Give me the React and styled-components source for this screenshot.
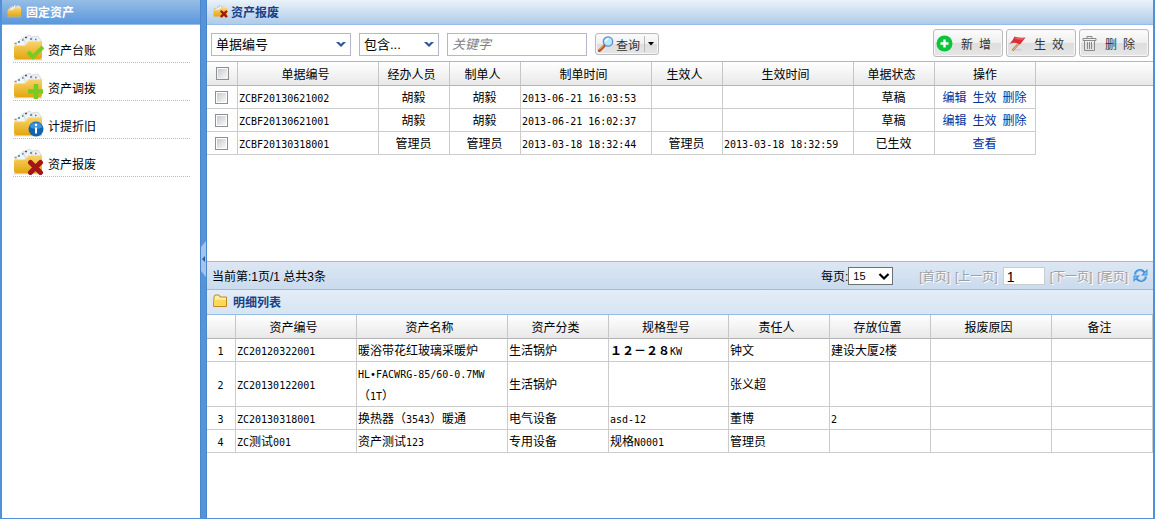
import React, { useState } from 'react';
import styled, { createGlobalStyle } from 'styled-components';

const GlobalStyle = createGlobalStyle`
  * {
    box-sizing: border-box;
  }

  body {
    margin: 0;
    color: #000;
    font-family: "Liberation Sans", "Noto Sans CJK SC", sans-serif;
    font-size: 12px;
  }

  button, input, select {
    font-family: inherit;
    font-size: inherit;
    margin: 0;
  }
`;

const Frame = styled.div`
  display: flex;
  min-height: 100vh;
  border: solid #5090d8;
  border-width: 0 2px 1px;
  background: #fff;
`;

const Sidebar = styled.aside`
  width: 198px;
  flex: none;
`;

const SidebarHeader = styled.h2`
  display: flex;
  align-items: center;
  gap: 4px;
  height: 25px;
  margin: 0;
  padding: 0 0 2px 5px;
  border-bottom: 1px solid #99bbe8;
  background: linear-gradient(#97bde6, #5a97dc);
  color: #fff;
  font-size: 12px;
`;

const Menu = styled.nav`
  padding: 0 10px 0 11px;
`;

const MenuItem = styled.a`
  display: flex;
  align-items: center;
  gap: 4px;
  height: 38px;
  padding-top: 7px;
  border-bottom: 1px dotted #bbb;
  color: #000;
  text-decoration: none;
`;

const MenuLabel = styled.span`
  padding-top: 4px;
`;

const Splitter = styled.div`
  display: flex;
  align-items: center;
  justify-content: flex-end;
  width: 7px;
  flex: none;
  border: solid #4a86d0;
  border-width: 0 1px;
  background: #5793d7;
`;

const SplitterHandle = styled.button`
  display: flex;
  padding: 0;
  border: 0;
  background: none;
`;

const Main = styled.main`
  flex: 1;
  min-width: 0;
`;

const PanelHeader = styled.h1`
  display: flex;
  align-items: center;
  gap: 3px;
  height: 25px;
  margin: 0;
  padding: 0 0 2px 6px;
  border-bottom: 1px solid #99bbe8;
  background: linear-gradient(#ebf2fa, #afcbe8);
  color: #15428b;
  font-size: 12px;
`;

const SectionHeader = styled(PanelHeader).attrs({ as: 'h2' })`
  gap: 5px;
  background: linear-gradient(#e4edf7, #d8e4f2);
`;

const Toolbar = styled.div`
  display: flex;
  align-items: center;
  justify-content: space-between;
  height: 37px;
  padding: 0 4px;
  border-bottom: 1px solid #99bbe8;
`;

const Filters = styled.form`
  display: flex;
  align-items: center;
  gap: 8px;
  padding-top: 2px;
`;

const Actions = styled.div`
  display: flex;
  gap: 3px;
`;

const SelectBox = styled.div`
  position: relative;
  width: ${({ $width }) => $width}px;

  svg {
    position: absolute;
    top: 8px;
    right: 5px;
    pointer-events: none;
  }
`;

const Select = styled.select`
  appearance: none;
  width: 100%;
  height: 23px;
  padding: 0 4px;
  border: 1px solid #b5b8c8;
  border-radius: 0;
  background: #fff;
  color: #000;
  font-size: 13px;
`;

const KeywordInput = styled.input`
  width: 140px;
  height: 23px;
  padding: 0 4px;
  border: 1px solid #b5b8c8;
  font-size: 13px;

  &::placeholder {
    color: #808080;
    font-style: italic;
    opacity: 1;
  }
`;

const Button = styled.button`
  display: flex;
  align-items: center;
  border: 1px solid #bbb;
  border-radius: 3px;
  background: linear-gradient(#fcfcfc, #efefef 48%, #dedede 52%, #e6e6e6);
  box-shadow: inset 0 0 0 1px #f6f6f6;
  color: #333;
  white-space: nowrap;
`;

const SearchButton = styled(Button)`
  gap: 2px;
  width: 64px;
  height: 22px;
  padding: 0 2px;

  svg {
    flex: none;
  }
`;

const ActionButton = styled(Button)`
  gap: 8px;
  width: 70px;
  height: 28px;
  padding: 0 0 0 2px;
`;

const ListArea = styled.div`
  min-height: 200px;
  border-bottom: 1px solid #99bbe8;
`;

const Grid = styled.table`
  width: 100%;
  table-layout: fixed;
  border-collapse: separate;
  border-spacing: 0;
  line-height: 22px;
  font-family: "Noto Sans CJK SC", sans-serif;
`;

const HeadCell = styled.th`
  width: ${({ $width }) => ($width ? `${$width}px` : 'auto')};
  height: 24px;
  padding: 0 ${({ $centered }) => ($centered ? 0 : 5)}px 0 0;
  border: solid #c6c6c6;
  border-width: 0 ${({ $open }) => ($open ? 0 : 1)}px 1px 0;
  border-bottom-color: #b4b4b4;
  background: linear-gradient(#fff, #e8e8e8);
  font-weight: normal;
`;

const Cell = styled.td`
  height: 23px;
  padding: 0 2px 0 1px;
  border: solid #ccc;
  border-width: 0 1px 1px 0;
  text-align: ${({ $align }) => $align || 'left'};
`;

const Checkbox = styled.input.attrs({ type: 'checkbox' })`
  appearance: none;
  display: block;
  width: 13px;
  height: 13px;
  margin: 0 auto;
  padding: 1px;
  border: 1px solid #8e8f8f;
  background: linear-gradient(135deg, #c6cbd2, #f7f7f7) content-box;
  background-color: #f4f4f4;

  &:checked {
    background: #4a86d0 content-box;
  }
`;

const RowLink = styled.a`
  margin: 0 3px;
  color: #039;
  text-decoration: none;
`;

// Half-width runs sit at half the width of a Chinese character
const Half = styled.span`
  font-family: "DejaVu Sans Mono", monospace;
  font-size: 10px;
  line-height: 1;
  white-space: pre;
`;

const Wide = styled.b`
  line-height: 1;
`;

const Pager = styled.div`
  display: flex;
  align-items: center;
  justify-content: space-between;
  height: 28px;
  padding: 0 5px;
  border-bottom: 1px solid #99bbe8;
  background: linear-gradient(#dce7f3, #cadbee);
`;

const PagerControls = styled.div`
  display: flex;
  align-items: center;
  gap: 5px;
`;

const PageSize = styled.label`
  display: flex;
  align-items: center;
  margin-right: 21px;
`;

const PageSizeBox = styled(SelectBox)`
  svg {
    top: 6px;
    right: 3px;
  }
`;

const PageSizeSelect = styled(Select)`
  height: 18px;
  border-color: #707070;
  font-size: 11px;
`;

const PageLink = styled.button`
  padding: 0;
  border: 0;
  background: none;
  color: #a0a0a0;
  text-shadow: 1px 1px #fff;
`;

const PageInput = styled.input`
  width: 42px;
  height: 18px;
  padding: 2px 3px 0;
  border: 1px solid #ccc;
  background: #fff;
  font-size: 14px;
`;

const RefreshButton = styled.button`
  display: flex;
  padding: 0;
  border: 0;
  background: none;
`;

const badges = {
  check: <path d="M15 18l5 5 10-10" fill="none" stroke="#76cc20" strokeWidth="4" />,
  plus: <path d="M23 12v15M15 19.500h15" fill="none" stroke="#76cc20" strokeWidth="4.500" />,
  info: (
    <>
      <circle cx="23" cy="19" r="7.500" fill="#1463ae" />
      <path d="M16.500 17a7 7 0 0 1 13 0q-6 4-13 0z" fill="#3f93dc" />
      <path d="M23 17.500v6" stroke="#fff" strokeWidth="2" />
      <circle cx="23" cy="15" r="1.200" fill="#fff" />
    </>
  ),
  cross: <path d="M17.500 14.500l10 10M27.500 14.500l-10 10" stroke="#a51417" strokeWidth="5" strokeLinecap="round" />,
};

const FolderIcon = ({ badge, width = 31, height = 27 }) => (
  <svg width={width} height={height} viewBox="0 0 31 27">
    <defs>
      <linearGradient id="folder" x1="0" y1="0" x2="0" y2="1">
        <stop offset="0" stopColor="#f8d46e" />
        <stop offset="1" stopColor="#e4a60f" />
      </linearGradient>
    </defs>
    <path d="M1 25.500h28" stroke="#ccc" strokeWidth="1.500" />
    <path d="M3 9l8-6 6 7-5 6H4z" fill="#f4f5f6" stroke="#cfd3d6" strokeWidth=".6" />
    <path d="M10 4l7-3 5 8-8 4z" fill="#f0f2f4" stroke="#c6cacd" strokeWidth=".6" />
    <path d="M19 3l6-1 4 6-2 4-8-2z" fill="#eef0f2" stroke="#c6cacd" strokeWidth=".6" />
    <path d="M5 8h2M9 6h1.500M17 5h2M22 5.500h1.500" stroke="#3d7fae" strokeWidth="1.500" />
    <path d="M12 3.500h2" stroke="#555" strokeWidth="1.400" />
    <path d="M1.500 9.500h2" stroke="#e0762a" strokeWidth="1.600" />
    <path d="M1 13q0-2 2-2h8q2 0 3-2t3-2h10q2 0 2 2v14q0 2-2 2H3q-2 0-2-2z" fill="url(#folder)" />
    <path d="M2 12.500q0-1 2-1h7q2 0 3-2t3-2h10" fill="none" stroke="#fbe295" />
    {badges[badge]}
  </svg>
);

const PlainFolderIcon = () => (
  <svg width="15" height="14" viewBox="0 0 15 14">
    <path d="M1 3l1-2h4l1 2h6.500v9.500h-13z" fill="#fff0a0" stroke="#bd8820" />
    <path d="M1 6q6-1 12 0v6H1z" fill="#fbd75a" />
  </svg>
);

const ChevronIcon = () => (
  <svg width="10" height="7" viewBox="0 0 10 7">
    <path d="M0 1h3l2 2 2-2h3L5 6z" fill="#2b5797" />
  </svg>
);

const NativeChevronIcon = () => (
  <svg width="12" height="8" viewBox="0 0 12 8">
    <path d="M1.500 1L6 5.500 10.500 1" fill="none" stroke="#000" strokeWidth="2.200" />
  </svg>
);

const SearchIcon = () => (
  <svg width="16" height="16" viewBox="0 0 16 16">
    <path d="M6 10l-4.500 4.500" stroke="#b84a22" strokeWidth="3" strokeLinecap="round" />
    <path d="M5.500 9.500l-4.500 4" stroke="#f0a04a" strokeWidth="1.500" />
    <circle cx="10" cy="5.500" r="4.700" fill="#b9e8fb" stroke="#5b8fd0" strokeWidth="1.300" />
    <path d="M7.500 5.500a3 3 0 0 1 3-2.500" fill="none" stroke="#fff" strokeWidth="1.400" />
  </svg>
);

const SplitArrowIcon = () => (
  <svg width="14" height="16" viewBox="0 0 14 16">
    <path d="M2.500 0v16" stroke="#bbb" />
    <path d="M6 6h6L9 9.500z" fill="#000" />
  </svg>
);

const AddIcon = () => (
  <svg width="17" height="17" viewBox="0 0 17 17">
    <circle cx="8.500" cy="8.500" r="8" fill="#0bc438" />
    <path d="M8.500 4.500v8M4.500 8.500h8" stroke="#fff" strokeWidth="2.400" />
  </svg>
);

const FlagIcon = () => (
  <svg width="17" height="17" viewBox="0 0 17 17">
    <path d="M4 15.500h10l-4-2z" fill="#ccc" />
    <path d="M12 6L3.500 15.500" stroke="#b98248" strokeWidth="2.200" />
    <path d="M12 6L4 15" stroke="#e8bd80" />
    <path d="M5.500 1.500Q9 3 16.500 2.500L11 9.500Q6 6.500 .5 9 4 5.500 5.500 1.500z" fill="#d92f38" />
    <path d="M6 3q4 1.200 8.500.6" fill="none" stroke="#f0686f" strokeWidth="1.200" />
  </svg>
);

const TrashIcon = () => (
  <svg width="15" height="17" viewBox="0 0 15 17" fill="none" stroke="#8a8a8a">
    <path d="M1 3.500h13v2H1zM5 3.500v-2h5v2M2.500 5.500v10h10v-10M5.500 7v7M7.500 7v7M9.500 7v7" />
  </svg>
);

const RefreshIcon = () => (
  <svg width="15" height="15" viewBox="0 0 15 15">
    <path d="M2 6.500q1-4.500 5.500-4.500 2.500 0 4 2.500M13 8.500q-1 4.500-5.500 4.500-2.500 0-4-2.500" fill="none" stroke="#3f91da" strokeWidth="2.200" />
    <path d="M14.500 1v6.500H8zM.500 14V7.500H7z" fill="#3f91da" />
    <path d="M3 5.500q1.500-3 4.500-3M12 9.500q-1.500 3-4.500 3" fill="none" stroke="#9fd0f5" strokeWidth=".8" />
    <path d="M13.500 3.500v3h-3zM1.500 11.500v-3h3z" fill="#8cc5f2" />
  </svg>
);

const HandleIcon = () => (
  <svg width="5" height="36" viewBox="0 0 5 36">
    <path d="M5 0v36L0 30V6z" fill="#a3c5ea" />
    <path d="M4 15v6L1 18z" fill="#2c5a94" />
  </svg>
);

const menuItems = [
  { label: '资产台账', badge: 'check' },
  { label: '资产调拨', badge: 'plus' },
  { label: '计提折旧', badge: 'info' },
  { label: '资产报废', badge: 'cross' },
];

const orderColumns = [
  { title: '单据编号', key: 'code', width: 141 },
  { title: '经办人员', key: 'handler', width: 71, align: 'center' },
  { title: '制单人', key: 'creator', width: 71, align: 'center' },
  { title: '制单时间', key: 'createdAt', width: 131 },
  { title: '生效人', key: 'approver', width: 71, align: 'center' },
  { title: '生效时间', key: 'approvedAt', width: 131 },
  { title: '单据状态', key: 'status', width: 81, align: 'center' },
];

const orders = [
  { code: 'ZCBF20130621002', handler: '胡毅', creator: '胡毅', createdAt: '2013-06-21 16:03:53', status: '草稿', actions: ['编辑', '生效', '删除'] },
  { code: 'ZCBF20130621001', handler: '胡毅', creator: '胡毅', createdAt: '2013-06-21 16:02:37', status: '草稿', actions: ['编辑', '生效', '删除'] },
  { code: 'ZCBF20130318001', handler: '管理员', creator: '管理员', createdAt: '2013-03-18 18:32:44', approver: '管理员', approvedAt: '2013-03-18 18:32:59', status: '已生效', actions: ['查看'] },
];

const detailColumns = [
  { title: '资产编号', key: 'code', width: 121 },
  { title: '资产名称', key: 'name', width: 151 },
  { title: '资产分类', key: 'category', width: 101 },
  { title: '规格型号', key: 'model', width: 120 },
  { title: '责任人', key: 'owner', width: 101 },
  { title: '存放位置', key: 'place', width: 101 },
  { title: '报废原因', key: 'reason', width: 121 },
  { title: '备注', key: 'remark' },
];

const details = [
  { code: 'ZC20120322001', name: '暖浴带花红玻璃采暖炉', category: '生活锅炉', model: '１２－２８KW', owner: '钟文', place: '建设大厦2楼' },
  { code: 'ZC20130122001', name: 'HL•FACWRG-85/60-0.7MW（1T）', category: '生活锅炉', owner: '张义超' },
  { code: 'ZC20130318001', name: '换热器（3543）暖通', category: '电气设备', model: 'asd-12', owner: '董博', place: '2' },
  { code: 'ZC测试001', name: '资产测试123', category: '专用设备', model: '规格N0001', owner: '管理员' },
];

const Mixed = ({ text = '' }) =>
  text.split(/([\x20-\x7e•]+|[０-９－]+)/).map((part, i) => {
    if (/^[\x20-\x7e•]/.test(part)) return <Half key={i}>{part}</Half>;
    if (/^[０-９－]/.test(part)) return <Wide key={i}>{part}</Wide>;
    return part;
  });

const OrderTable = () => {
  const [selected, setSelected] = useState([]);

  const toggle = (code) => {
    setSelected(selected.includes(code) ? selected.filter(c => c !== code) : [...selected, code]);
  };

  const toggleAll = () => {
    setSelected(selected.length === orders.length ? [] : orders.map(o => o.code));
  };

  return (
    <Grid>
      <thead>
        <tr>
          <HeadCell $width={31} $centered>
            <Checkbox aria-label="全选" checked={selected.length === orders.length} onChange={toggleAll} />
          </HeadCell>
          {orderColumns.map(col => (
            <HeadCell key={col.key} $width={col.width}>{col.title}</HeadCell>
          ))}
          <HeadCell $width={101} $centered>操作</HeadCell>
          <HeadCell as="td" $open />
        </tr>
      </thead>
      <tbody>
        {orders.map(order => (
          <tr key={order.code}>
            <Cell>
              <Checkbox
                aria-label={order.code}
                checked={selected.includes(order.code)}
                onChange={() => toggle(order.code)}
              />
            </Cell>
            {orderColumns.map(col => (
              <Cell key={col.key} $align={col.align}><Mixed text={order[col.key]} /></Cell>
            ))}
            <Cell $align="center">
              {order.actions.map(action => <RowLink key={action} href="#">{action}</RowLink>)}
            </Cell>
          </tr>
        ))}
      </tbody>
    </Grid>
  );
};

const DetailTable = () => (
  <Grid>
    <thead>
      <tr>
        <HeadCell as="td" $width={29} />
        {detailColumns.map(col => (
          <HeadCell key={col.key} $width={col.width}>{col.title}</HeadCell>
        ))}
      </tr>
    </thead>
    <tbody>
      {details.map((item, i) => (
        <tr key={item.code}>
          <Cell $align="center"><Mixed text={String(i + 1)} /></Cell>
          {detailColumns.map(col => (
            <Cell key={col.key}><Mixed text={item[col.key]} /></Cell>
          ))}
        </tr>
      ))}
    </tbody>
  </Grid>
);

const App = () => {
  const [keyword, setKeyword] = useState('');
  const [page, setPage] = useState('1');

  return (
    <>
      <GlobalStyle />
      <Frame>
        <Sidebar>
          <SidebarHeader>
            <FolderIcon width={15} height={14} />
            固定资产
          </SidebarHeader>
          <Menu>
            {menuItems.map(item => (
              <MenuItem key={item.label} href="#">
                <FolderIcon badge={item.badge} />
                <MenuLabel>{item.label}</MenuLabel>
              </MenuItem>
            ))}
          </Menu>
        </Sidebar>
        <Splitter>
          <SplitterHandle type="button" aria-label="收起">
            <HandleIcon />
          </SplitterHandle>
        </Splitter>
        <Main>
          <PanelHeader>
            <FolderIcon badge="cross" width={15} height={14} />
            资产报废
          </PanelHeader>
          <Toolbar>
            <Filters onSubmit={e => e.preventDefault()}>
              <SelectBox $width={140}>
                <Select aria-label="查询字段">
                  <option>单据编号</option>
                </Select>
                <ChevronIcon />
              </SelectBox>
              <SelectBox $width={80}>
                <Select aria-label="查询条件">
                  <option>包含...</option>
                </Select>
                <ChevronIcon />
              </SelectBox>
              <KeywordInput
                aria-label="关键字"
                placeholder="关键字"
                value={keyword}
                onChange={e => setKeyword(e.target.value)}
              />
              <SearchButton type="submit">
                <SearchIcon />
                查询
                <SplitArrowIcon />
              </SearchButton>
            </Filters>
            <Actions>
              <ActionButton type="button"><AddIcon /><span><Mixed text="新 增" /></span></ActionButton>
              <ActionButton type="button"><FlagIcon /><span><Mixed text="生 效" /></span></ActionButton>
              <ActionButton type="button"><TrashIcon /><span><Mixed text="删 除" /></span></ActionButton>
            </Actions>
          </Toolbar>
          <ListArea>
            <OrderTable />
          </ListArea>
          <Pager>
            <span>当前第:1页/1 总共3条</span>
            <PagerControls>
              <PageSize>
                每页:
                <PageSizeBox $width={45}>
                  <PageSizeSelect>
                    <option>15</option>
                  </PageSizeSelect>
                  <NativeChevronIcon />
                </PageSizeBox>
              </PageSize>
              <PageLink type="button">[首页]</PageLink>
              <PageLink type="button">[上一页]</PageLink>
              <PageInput aria-label="页码" value={page} onChange={e => setPage(e.target.value)} />
              <PageLink type="button">[下一页]</PageLink>
              <PageLink type="button">[尾页]</PageLink>
              <RefreshButton type="button" aria-label="刷新"><RefreshIcon /></RefreshButton>
            </PagerControls>
          </Pager>
          <SectionHeader>
            <PlainFolderIcon />
            明细列表
          </SectionHeader>
          <DetailTable />
        </Main>
      </Frame>
    </>
  );
};

export default App;
